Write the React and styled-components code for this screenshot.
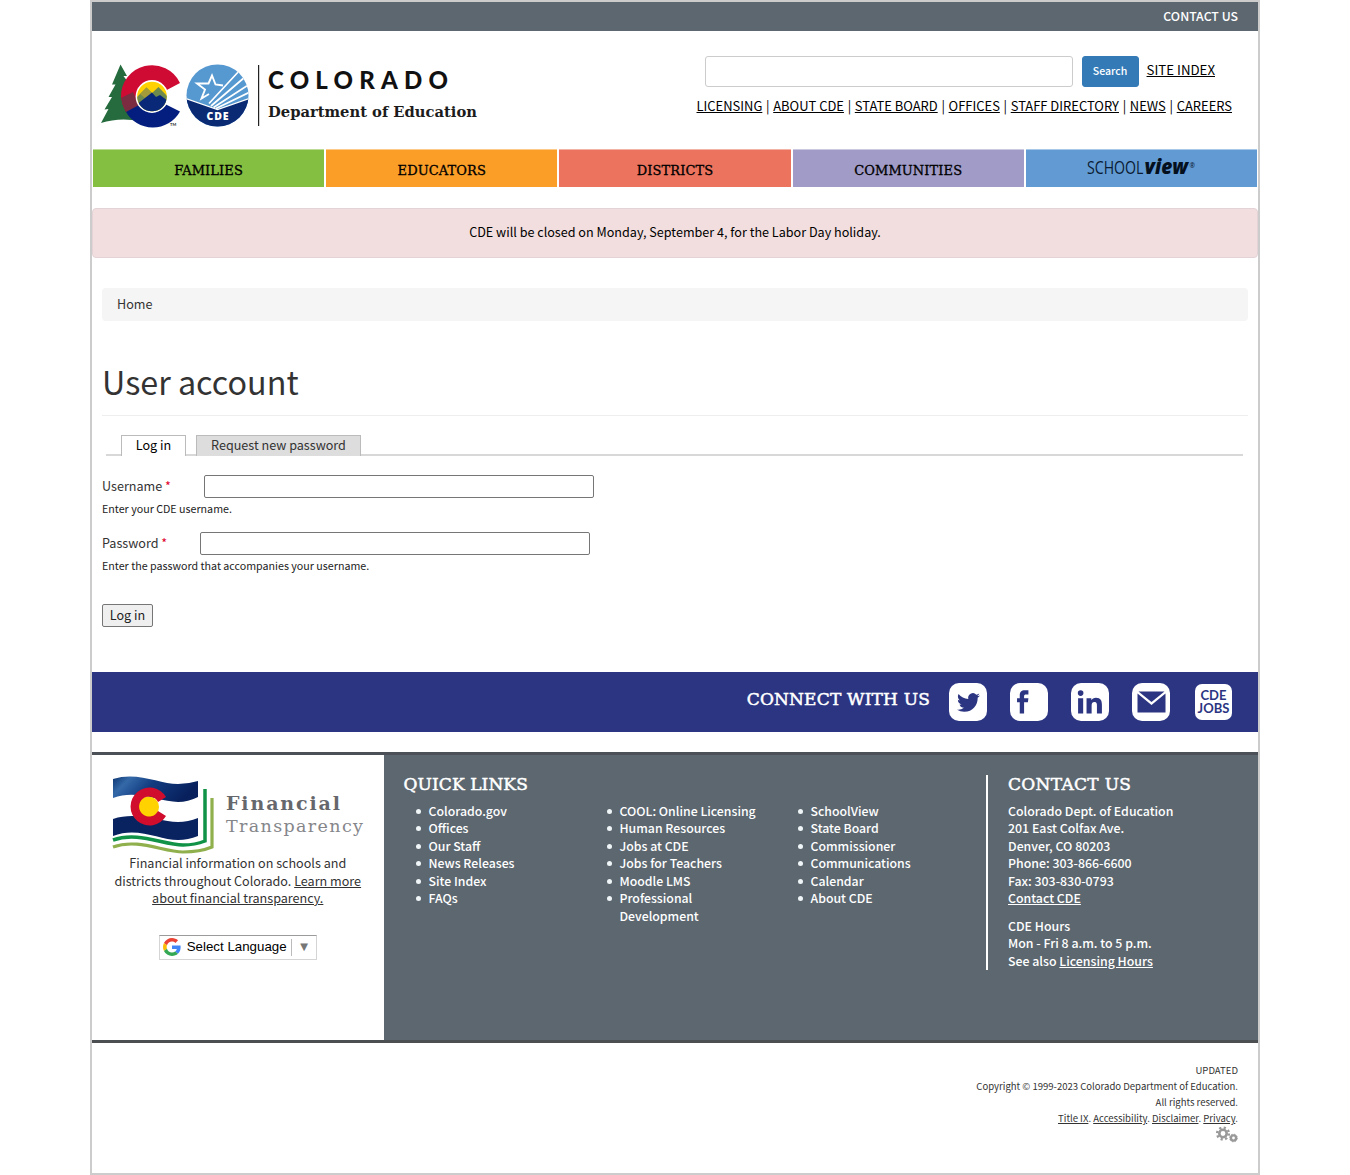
import React from 'react';
import styled, { createGlobalStyle } from 'styled-components';

const sans = `'Noto Sans CJK SC', 'Noto Sans CJK JP', 'Open Sans', sans-serif`;
const slab = `'DejaVu Serif', serif`;

const GlobalStyle = createGlobalStyle`
  *, *::before, *::after { box-sizing: border-box; }
  body { margin: 0; background: #fff; color: #333; font: 12.6px/17.5px ${sans}; }
  h1, h2, p, ul { margin: 0; padding: 0; }
  a { color: inherit; text-decoration: underline; }
  input, button { font-family: inherit; }
`;

const Page = styled.div`
  width: 1170px;
  height: 1175px;
  margin: 0 auto;
  border: 2px solid #ccc;
  display: flex;
  flex-direction: column;
`;

const TopBar = styled.div`
  height: 29px;
  flex: none;
  background: #5c6770;
  color: #fff;
  display: flex;
  justify-content: flex-end;
  padding: 5px 20px 0 0;
  font-size: 12.3px;
  font-weight: 500;
  line-height: 19px;
`;

const Header = styled.header`
  height: 118px;
  flex: none;
  display: flex;
  justify-content: space-between;
  padding: 25px 26px 0 8px;
`;

const Tools = styled.div`
  display: flex;
  flex-direction: column;
  align-items: flex-end;
  color: #000;
`;

const SearchRow = styled.div`
  display: flex;
  align-items: flex-start;
  padding-right: 17px;
`;

const SearchInput = styled.input`
  width: 368px;
  height: 31px;
  border: 1px solid #ccc;
  border-radius: 3px;
  margin-right: 9px;
`;

const SearchButton = styled.button`
  width: 57px;
  height: 31px;
  border: 1px solid #337ab7;
  border-radius: 3px;
  background: #337ab7;
  color: #fff;
  font-size: 10.6px;
  font-weight: 500;
  padding: 0 0 2px;
  margin-right: 8px;
`;

const SiteIndex = styled.a`
  font-size: 13.25px;
  line-height: 27px;
`;

const LinkRow = styled.nav`
  display: flex;
  font-size: 12.95px;
  line-height: 18px;
  margin-top: 10px;
  white-space: nowrap;
`;

const LinkItem = styled.span`
  & + &::before {
    content: '|';
    padding: 0 3.7px;
  }
`;

const MainNav = styled.nav`
  height: 38px;
  flex: none;
  display: grid;
  grid-template-columns: repeat(5, 1fr);
  column-gap: 2px;
  padding: 0 1px;
`;

const NavTab = styled.div`
  background: ${(p) => p.$color};
  border-top: 1px solid rgba(255, 255, 255, 0.45);
  color: #000;
  display: flex;
  justify-content: center;
  align-items: center;
  padding-top: ${(p) => (p.$logo ? '0' : '4px')};
  font: 13px/18px ${slab};
  letter-spacing: 0.1px;
  -webkit-text-stroke: ${(p) => (p.$logo ? '0' : '0.3px #000')};
`;

const Alert = styled.div`
  height: 50px;
  flex: none;
  margin-top: 21px;
  background: #f2dede;
  border: 1px solid #e3d3d6;
  border-radius: 4px;
  color: #000;
  text-align: center;
  line-height: 46px;
`;

const Main = styled.main`
  height: 414px;
  flex: none;
  padding: 30px 10px 0;
`;

const Breadcrumb = styled.div`
  height: 33px;
  background: #f5f5f5;
  border-radius: 4px;
  padding-left: 15px;
  line-height: 31px;
`;

const Title = styled.h1`
  height: 95px;
  border-bottom: 1px solid #eee;
  padding-top: 38px;
  font-size: 32.3px;
  font-weight: 400;
  line-height: 44px;
`;

const Tabs = styled.div`
  height: 21px;
  margin: 19px 5px 0 4px;
  padding-left: 15px;
  display: flex;
  gap: 10px;
  box-shadow: inset 0 -2px #d8d8d8;
`;

const Tab = styled.div`
  width: ${(p) => p.$width};
  height: 21px;
  border: 1px solid #bbb;
  border-bottom: 0;
  background: ${(p) => (p.$active ? '#fff' : '#ddd')};
  color: ${(p) => (p.$active ? '#000' : '#333')};
  text-align: center;
  line-height: 18px;
`;

const Form = styled.form`
  padding-top: 19px;
`;

const Field = styled.div`
  height: 57px;
`;

const FieldRow = styled.div`
  display: flex;
  height: 23px;
`;

const FieldLabel = styled.label`
  width: ${(p) => p.$width};
  line-height: 21px;
`;

const Required = styled.span`
  color: #e0002a;
`;

const TextInput = styled.input`
  width: 390px;
  height: 23px;
  border: 1px solid #767676;
  border-radius: 2px;
`;

const Hint = styled.p`
  font-size: 10.7px;
  line-height: 21px;
  color: #222;
`;

const LoginButton = styled.button`
  width: 51px;
  height: 23px;
  margin-top: 15px;
  padding: 0 0 2px;
  border: 1px solid #767676;
  border-radius: 2px;
  background: #efefef;
  color: #222;
  font-size: 12.6px;
  line-height: 18px;
`;

const ConnectBar = styled.section`
  height: 60px;
  flex: none;
  background: #2c3582;
  display: flex;
  justify-content: flex-end;
  align-items: center;
  padding-right: 26px;
`;

const SlabHeading = styled.h2`
  font: 400 17px/24px ${slab};
  letter-spacing: 0.1px;
  color: #fff;
  white-space: nowrap;
  -webkit-text-stroke: 0.5px #fff;
`;

const ConnectHeading = styled(SlabHeading)`
  padding-bottom: 7px;
  letter-spacing: 0.18px;
`;

const SocialList = styled.div`
  display: flex;
  align-items: center;
  gap: 23px;
  margin-left: 19px;
`;

const SocialTile = styled.a`
  width: ${(p) => (p.$small ? '37px' : '38px')};
  height: ${(p) => (p.$small ? '36px' : '38px')};
  margin-left: ${(p) => (p.$small ? '2px' : '0')};
  border-radius: ${(p) => (p.$small ? '7px' : '10px')};
  padding-right: ${(p) => p.$shift || '0'};
  background: #fff;
  color: #2c3582;
  display: flex;
  flex-direction: column;
  align-items: center;
  justify-content: center;
  text-decoration: none;
  font: 700 13px/13px Lato, ${sans};
`;

const Footer = styled.footer`
  height: 291px;
  flex: none;
  margin-top: 20px;
  border-top: 3px solid #4b5157;
  border-bottom: 3px solid #4b4f52;
  display: flex;
  background: #5c6770;
  color: #fff;
`;

const FinanceColumn = styled.section`
  width: 291.5px;
  background: #fff;
  color: #333;
  text-align: center;
  padding-top: 20px;
  display: flex;
  flex-direction: column;
  align-items: center;
`;

const FinanceText = styled.p`
  margin-top: -1px;
  white-space: nowrap;
`;

const LanguagePicker = styled.div`
  width: 158px;
  height: 25px;
  margin-top: 28px;
  border: 1px solid #d5d5d5;
  border-top-color: #9b9b9b;
  display: flex;
  align-items: center;
  padding: 0 5px 0 3px;
  color: #000;
  font: 13.3px/20px 'Liberation Sans', sans-serif;
  white-space: nowrap;
`;

const LanguageLabel = styled.span`
  margin-left: 6px;
`;

const Arrow = styled.span`
  margin-left: auto;
  padding-left: 6px;
  border-left: 1px solid #bbb;
  color: #767676;
  display: flex;
  align-items: center;
  height: 17px;
`;

const LinksColumn = styled.section`
  width: 602.5px;
  padding: 17px 0 0 20px;
`;

const LinkGrid = styled.div`
  display: grid;
  grid-template-columns: repeat(3, 191px);
  margin-top: 6.5px;
`;

const LinkList = styled.ul`
  list-style: none;
  font-size: 12.3px;
  font-weight: 500;
`;

const LinkEntry = styled.li`
  display: flex;
  white-space: nowrap;
  &::before {
    content: '';
    width: 5px;
    height: 5px;
    border-radius: 50%;
    background: #f0f6f8;
    margin: 6px 8px 0 12px;
  }
`;

const ContactColumn = styled.section`
  height: 195px;
  margin-top: 20px;
  padding-left: 20px;
  border-left: 2px solid #fff;
  font-size: 12.35px;
  font-weight: 500;
  white-space: nowrap;
`;

const ContactHeading = styled(SlabHeading)`
  margin: -3px 0 6.5px;
  letter-spacing: 0.3px;
`;

const Hours = styled.p`
  margin-top: 10px;
`;

const Legal = styled.section`
  padding: 19px 20px 0 0;
  text-align: right;
  font-size: 9.55px;
  line-height: 16px;
`;

const Gears = styled.svg`
  display: block;
  margin-left: auto;
`;

function HeaderLogo() {
  return (
    <svg width="390" height="72" viewBox="100 56 390 72">
      <defs>
        <clipPath id="sealClip"><circle cx="217.500" cy="95.500" r="31" /></clipPath>
        <clipPath id="sunClip"><circle cx="152" cy="96.500" r="14.800" /></clipPath>
      </defs>
      <path d="M120.500 64.500 L127 76 L123.500 76 L131 86 L127.500 86.500 L137 104 L140 121 Q119 117 101 123 L108.500 109 L104.500 109.500 L112 97 L108.500 97 L115.500 84.500 L112 84.500 Z" fill="#256b3d" />
      <path d="M180 83 A31 31 0 0 0 121 97 Q122 105 126 112 L152 97 L163 92 Z" fill="#cf0a33" />
      <path d="M125.500 111 A31 31 0 0 0 180 111.500 L163 103 L152 97 Z" fill="#041e80" />
      <path d="M121 98 L133 92 L139 105 L126 112 Q122 105 121 98 Z" fill="#7c2c40" />
      <circle cx="152" cy="96.500" r="16.400" fill="#fff" />
      <g clipPath="url(#sunClip)">
        <rect x="136" y="80" width="32" height="33" fill="#ffd100" />
        <path d="M136 98 L146.500 87.500 L152 93 L158.500 87 L168 97 V112 H136 Z" fill="#6f8a4d" />
        <path d="M140 94 L146.500 87.500 L152 93 L146 99 Z" fill="#a39b3a" />
        <path d="M136 105 L152 92.500 L156 97 L160 95 L168 101 V113 H136 Z" fill="#0a2878" />
      </g>
      <text x="170" y="125.500" fontSize="4" fontWeight="700" fontFamily="Lato, sans-serif" fill="#222">TM</text>
      <g clipPath="url(#sealClip)">
        <rect x="186" y="64" width="63" height="63" fill="#5698d0" />
        <path d="M209 103.500 L240 70 M211 106 L245 77 M213.500 107.500 L249 84.500 M216 108.500 L250 92" fill="none" stroke="#fff" strokeWidth="1.700" />
        <path d="M186 98.500 L217.500 109.500 L249 98.500 V128 H186 Z" fill="#0a2a74" />
        <path d="M186 98.500 L217.500 109.500 L249 98.500" fill="none" stroke="#fff" strokeWidth="1.300" />
      </g>
      <path d="M223 85.500 L215.500 84.500 L212 75.500 L208.500 83.500 L197 83.500 L205 89.500 L201.500 98.500 L209 94" fill="none" stroke="#fff" strokeWidth="1.900" />
      <text x="206.500" y="120" fontSize="10.500" fontWeight="800" textLength="22" fontFamily="'Open Sans', sans-serif" fill="#fff">CDE</text>
      <rect x="258" y="65" width="1.200" height="61" fill="#222" />
      <text x="268" y="89" fontSize="24" fontWeight="900" textLength="180" fontFamily="Lato, sans-serif" fill="#111">COLORADO</text>
      <text x="268" y="116.500" fontSize="15.300" fontWeight="700" textLength="209" lengthAdjust="spacingAndGlyphs" fontFamily="'DejaVu Serif', serif" fill="#1c1c1c">Department of Education</text>
    </svg>
  );
}

function SchoolViewLogo() {
  return (
    <svg width="122" height="34" viewBox="-6 0 122 34">
      <text x="1" y="22" fontSize="18" textLength="56.500" lengthAdjust="spacingAndGlyphs" letterSpacing="0" fontFamily="'Open Sans', sans-serif" fill="#0a1c33">SCHOOL</text>
      <text x="58.500" y="22" fontSize="21.500" fontWeight="800" fontStyle="italic" textLength="43.500" lengthAdjust="spacingAndGlyphs" letterSpacing="0" fontFamily="'Open Sans', sans-serif" fill="#05101f">view</text>
      <text x="103.500" y="16" fontSize="6.500" fontFamily="'Open Sans', sans-serif" fill="#05101f">®</text>
    </svg>
  );
}

function FinanceLogo() {
  return (
    <svg width="254" height="80" viewBox="111 775 254 80">
      <defs>
        <linearGradient id="flagBlue" x1="0" y1="0" x2="1" y2="0.3">
          <stop offset="0" stopColor="#0c3470" />
          <stop offset="0.200" stopColor="#3469a8" />
          <stop offset="0.500" stopColor="#123c80" />
          <stop offset="1" stopColor="#08205c" />
        </linearGradient>
      </defs>
      <path d="M113 847 C138 838 163 852 183 852 Q200 852 212 847 L212 798" fill="none" stroke="#8fb04c" strokeWidth="3.200" />
      <path d="M113 840 C138 831 163 845 183 845 Q195 845 205 841 L205 789" fill="none" stroke="#109247" strokeWidth="3.500" />
      <path d="M113 779 C137 771 160 784 178 784 Q188 784 198 781 L198 836 Q188 840 178 840 C160 840 137 826 113 834 Z" fill="#fff" />
      <path d="M113 779 C137 771 160 784 178 784 Q188 784 198 781 L198 797 Q188 802 178 802 C160 802 137 789 113 798 Z" fill="url(#flagBlue)" />
      <path d="M113 819 C137 811 160 822 178 822 Q188 822 198 818 L198 836 Q188 840 178 840 C160 840 137 826 113 836 Z" fill="#092360" />
      <circle cx="148.500" cy="807" r="10.500" fill="#ffd200" />
      <path d="M166 797 A19 19 0 1 0 166 816 L158 811 A10 10 0 1 1 158 802 Z" fill="#d00d2c" />
      <text x="226" y="810" fontSize="19" fontWeight="700" textLength="114" fontFamily="'DejaVu Serif', serif" fill="#66676c">Financial</text>
      <text x="226" y="832" fontSize="17.500" fontWeight="300" textLength="137" fontFamily="'DejaVu Serif', serif" fill="#85868a">Transparency</text>
    </svg>
  );
}

function GoogleMark() {
  return (
    <svg width="18" height="18" viewBox="0 0 48 48">
      <path fill="#EA4335" d="M24 9.500c3.500 0 6.700 1.200 9.200 3.600l6.900-6.900C35.900 2.400 30.500 0 24 0 14.600 0 6.500 5.400 2.600 13.200l8 6.200C12.400 13.700 17.700 9.500 24 9.500z" />
      <path fill="#4285F4" d="M47 24.500c0-1.600-.2-3.100-.4-4.500H24v9h12.900c-.6 3-2.300 5.500-4.800 7.200l7.700 6C44.400 38 47 31.800 47 24.500z" />
      <path fill="#FBBC05" d="M10.500 28.600c-.5-1.500-.8-3-.8-4.600s.3-3.100.8-4.600l-8-6.200C1 16.500 0 20.100 0 24s.9 7.500 2.600 10.800z" />
      <path fill="#34A853" d="M24 48c6.500 0 11.900-2.100 15.900-5.800l-7.700-6c-2.200 1.500-4.900 2.300-8.200 2.300-6.300 0-11.600-4.200-13.500-9.900l-8 6.200C6.500 42.600 14.600 48 24 48z" />
    </svg>
  );
}

const Glyph = ({ d, size = 26 }) => (
  <svg width={size} height={size} viewBox="0 0 24 24" fill="currentColor">
    <path d={d} />
  </svg>
);

const glyphs = {
  twitter: 'M23.950 4.570a10 10 0 0 1-2.820.770 4.960 4.960 0 0 0 2.160-2.720c-.950.550-2 .960-3.130 1.180a4.920 4.920 0 0 0-8.380 4.480C7.690 8.100 4.070 6.130 1.640 3.160a4.820 4.820 0 0 0-.670 2.480c0 1.710.870 3.210 2.190 4.100a4.900 4.900 0 0 1-2.230-.620v.060a4.920 4.920 0 0 0 3.950 4.830 5 5 0 0 1-2.210.080 4.940 4.940 0 0 0 4.600 3.420A9.870 9.870 0 0 1 0 19.540a13.990 13.990 0 0 0 7.560 2.210c9.050 0 14-7.500 14-13.980 0-.210 0-.420-.020-.630a9.940 9.940 0 0 0 2.460-2.550z',
  facebook: 'M6.500 8.500H9V6C9 2.500 10.600 1.200 13.600 1.200H17V5H15C13.400 5 13 5.600 13 6.800V8.500H17L16.500 12.300H13V22.500H9V12.300H6.500Z',
  linkedin: 'M1 8.500H5.700V22.500H1Z M3.350 1.200A2.600 2.600 0 1 1 3.340 6.400 2.600 2.600 0 0 1 3.350 1.200Z M8.800 8.500H13.200V10.400C14 9 15.500 8.100 17.500 8.100 21.900 8.100 23 10.900 23 14.700V22.500H18.400V15.500C18.400 13.700 18.300 12 16.200 12 14 12 13.500 13.600 13.500 15.400V22.500H8.800Z',
};

function MailGlyph() {
  return (
    <svg width="29" height="22" viewBox="0 0 29 22">
      <path d="M1.500 0.500H27.500L14.500 11Z" fill="#2c3582" />
      <path d="M0.500 2.500L14.500 14L28.500 2.500V21.500H0.500Z" fill="#2c3582" />
    </svg>
  );
}

const headerLinks = ['LICENSING', 'ABOUT CDE', 'STATE BOARD', 'OFFICES', 'STAFF DIRECTORY', 'NEWS', 'CAREERS'];

const sections = [
  { label: 'FAMILIES', color: '#85bf41' },
  { label: 'EDUCATORS', color: '#fb9e27' },
  { label: 'DISTRICTS', color: '#ec735e' },
  { label: 'COMMUNITIES', color: '#a19bc8' },
];

const quickLinks = [
  ['Colorado.gov', 'Offices', 'Our Staff', 'News Releases', 'Site Index', 'FAQs'],
  ['COOL: Online Licensing', 'Human Resources', 'Jobs at CDE', 'Jobs for Teachers', 'Moodle LMS', <>Professional<br />Development</>],
  ['SchoolView', 'State Board', 'Commissioner', 'Communications', 'Calendar', 'About CDE'],
];

export default function App() {
  return (
    <>
      <GlobalStyle />
      <Page>
        <TopBar>CONTACT US</TopBar>
        <Header>
          <HeaderLogo />
          <Tools>
            <SearchRow>
              <SearchInput />
              <SearchButton>Search</SearchButton>
              <SiteIndex href="#">SITE INDEX</SiteIndex>
            </SearchRow>
            <LinkRow>
              {headerLinks.map((label) => (
                <LinkItem key={label}><a href="#">{label}</a></LinkItem>
              ))}
            </LinkRow>
          </Tools>
        </Header>
        <MainNav>
          {sections.map((s) => (
            <NavTab key={s.label} $color={s.color}>{s.label}</NavTab>
          ))}
          <NavTab $color="#629bd3" $logo><SchoolViewLogo /></NavTab>
        </MainNav>
        <Alert>CDE will be closed on Monday, September 4, for the Labor Day holiday.</Alert>
        <Main>
          <Breadcrumb>Home</Breadcrumb>
          <Title>User account</Title>
          <Tabs>
            <Tab $active $width="65px">Log in</Tab>
            <Tab $width="165px">Request new password</Tab>
          </Tabs>
          <Form>
            <Field>
              <FieldRow>
                <FieldLabel $width="102px">Username <Required>*</Required></FieldLabel>
                <TextInput />
              </FieldRow>
              <Hint>Enter your CDE username.</Hint>
            </Field>
            <Field>
              <FieldRow>
                <FieldLabel $width="98px">Password <Required>*</Required></FieldLabel>
                <TextInput type="password" />
              </FieldRow>
              <Hint>Enter the password that accompanies your username.</Hint>
            </Field>
            <LoginButton type="button">Log in</LoginButton>
          </Form>
        </Main>
        <ConnectBar>
          <ConnectHeading>CONNECT WITH US</ConnectHeading>
          <SocialList>
            <SocialTile><Glyph d={glyphs.twitter} size={23} /></SocialTile>
            <SocialTile $shift="12px"><Glyph d={glyphs.facebook} /></SocialTile>
            <SocialTile><Glyph d={glyphs.linkedin} /></SocialTile>
            <SocialTile><MailGlyph /></SocialTile>
            <SocialTile $small><span>CDE</span><span>JOBS</span></SocialTile>
          </SocialList>
        </ConnectBar>
        <Footer>
          <FinanceColumn>
            <FinanceLogo />
            <FinanceText>
              Financial information on schools and<br />
              districts throughout Colorado. <a href="#">Learn more<br />about financial transparency.</a>
            </FinanceText>
            <LanguagePicker>
              <GoogleMark />
              <LanguageLabel>Select Language</LanguageLabel>
              <Arrow>▼</Arrow>
            </LanguagePicker>
          </FinanceColumn>
          <LinksColumn>
            <SlabHeading>QUICK LINKS</SlabHeading>
            <LinkGrid>
              {quickLinks.map((list, i) => (
                <LinkList key={i}>
                  {list.map((item, j) => (
                    <LinkEntry key={j}><span>{item}</span></LinkEntry>
                  ))}
                </LinkList>
              ))}
            </LinkGrid>
          </LinksColumn>
          <ContactColumn>
            <ContactHeading>CONTACT US</ContactHeading>
            <p>
              Colorado Dept. of Education<br />
              201 East Colfax Ave.<br />
              Denver, CO 80203<br />
              Phone: 303-866-6600<br />
              Fax: 303-830-0793<br />
              <a href="#">Contact CDE</a>
            </p>
            <Hours>
              CDE Hours<br />
              Mon - Fri 8 a.m. to 5 p.m.<br />
              See also <a href="#">Licensing Hours</a>
            </Hours>
          </ContactColumn>
        </Footer>
        <Legal>
          <p>UPDATED</p>
          <p>Copyright © 1999-2023 Colorado Department of Education.</p>
          <p>All rights reserved.</p>
          <p><a href="#">Title IX</a>. <a href="#">Accessibility</a>. <a href="#">Disclaimer</a>. <a href="#">Privacy</a>.</p>
          <Gears width="23" height="17" viewBox="0 0 23 17" fill="none" stroke="#999">
            <circle cx="8" cy="7.500" r="3.700" strokeWidth="2.600" />
            <circle cx="8" cy="7.500" r="5.900" strokeWidth="2.400" strokeDasharray="2.200 2.434" />
            <circle cx="18.500" cy="12" r="2.600" strokeWidth="2.400" />
            <circle cx="18.500" cy="12" r="3.800" strokeWidth="1" strokeDasharray="1.500 1.485" />
          </Gears>
        </Legal>
      </Page>
    </>
  );
}
